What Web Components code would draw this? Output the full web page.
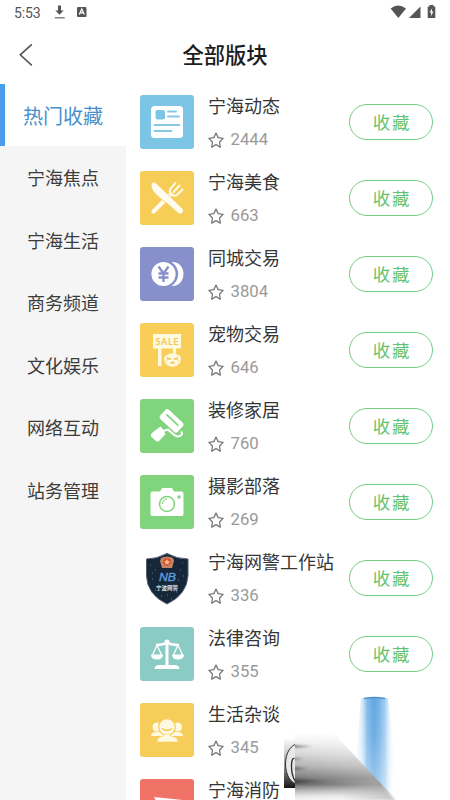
<!DOCTYPE html>
<html lang="zh-CN">
<head>
<meta charset="utf-8">
<title>全部版块</title>
<style>
html,body{margin:0;height:100%;overflow:hidden;background:#fff}
body{font-family:Roboto,"Noto Sans CJK SC",sans-serif;color:#333}
</style>
</head>
<body>
<forum-app></forum-app>
<script>
const define=(name,render)=>customElements.define(name,class extends HTMLElement{
  connectedCallback(){
    if(this.shadowRoot)return;
    this.attachShadow({mode:'open'}).innerHTML=render(this);
  }
});

define('status-bar',()=>`<style>
:host{display:flex;height:25px;box-sizing:border-box;padding:0 14px 0 14px;align-items:center;color:#555;font-size:14px}
time{width:40px;line-height:25px;padding-top:1px;letter-spacing:-.1px}
svg{display:block}.sp{flex:1}
</style><time>5:53</time>
<svg width="34" height="25" viewBox="54 0 34 25"><path d="M58 5.500h3v5h2.700l-4.200 4.300-4.200-4.300H58z" fill="#555"/><path d="M54.700 17.800h10" stroke="#666" stroke-width="1.200"/><rect x="77" y="7" width="9.500" height="10" rx="1" fill="#555"/><path d="M79.300 14.500l2.500-5.500 2.500 5.500M80.200 12.800h3.200" fill="none" stroke="#fff" stroke-width="1.300"/></svg>
<span class="sp"></span>
<svg width="47" height="25" viewBox="389 0 47 25"><path d="M390.600 8.500q7.600-6 15.400 0l-7.700 9.500z" fill="#555"/><path d="M420.500 6.500V18H409z" fill="#555"/><path d="M429.500 5h4v1.500h1.800V18h-7.600V6.500h1.800z" fill="#555"/><path d="M432.200 8l-2.700 4.500h1.700l-.3 3.700 2.600-4.700h-1.700z" fill="#fff"/></svg>`);

define('title-bar',()=>`<style>
:host{display:grid;grid-template-columns:50px 1fr 50px;height:59px;align-items:center}
h1{margin:0;padding-top:1px;text-align:center;font-size:21.300px;line-height:59px;font-weight:500;color:#1c1c1c}
svg{display:block}
</style><svg width="50" height="59" viewBox="0 25 50 59"><path d="M31.800 43.300L20.300 53.800 31.800 64.300" fill="none" stroke="#555" stroke-width="1.600"/></svg><h1><slot></slot></h1>`);

define('side-tab',()=>`<style>
:host{display:flex;box-sizing:border-box;height:62.500px;padding-top:4px;align-items:center;justify-content:center;font-size:18px;line-height:26px;color:#3c3c3c}
:host([active]){height:62px;background:#fff;border-left:5px solid #499deb;padding-right:5px;color:#4790cc;font-size:20px}
</style><slot></slot>`);

define('side-nav',()=>`<style>:host{display:block;background:#f5f5f5;width:126px;flex:none}</style><slot></slot>`);

const icons={
news:['#7cc5e5','<rect x="11" y="11" width="32" height="32" rx="3.500" fill="#fff"/><rect x="15.500" y="15" width="9.500" height="9.500" rx="2" fill="#7cc5e5"/><path d="M28 16.500h8M28 21.500h11M14.500 30h25M14.500 36h17" stroke="#88c7e2" stroke-width="1.800" stroke-linecap="round"/>'],
food:['#f6cd57','<g stroke="#fffcef" fill="none" stroke-linecap="round"><path d="M13.500 40.500l16-16" stroke-width="4.300"/><path d="M35.500 12l-5 5.500c-2.500 3.500 2.500 9 6.500 6.500l5.500-5.500M39.500 14.500l-6 6.500" stroke-width="1.900"/></g><path d="M11.500 12.500q1.500-3 5 0l26.500 25.500q1.500 2-.5 4t-4 .5L26 31.500Q13 23 11 16z" fill="#fffcef" stroke="#f6cd57" stroke-width=".8"/>'],
money:['#8790cb','<path d="M31.500 15c16-1 16 25 0 24 9-6 9-18 0-24z" fill="#fff"/><circle cx="23.500" cy="27" r="13" fill="#fff" stroke="#8790cb" stroke-width="1.800"/><path d="M18.500 19.500l5 7 5-7M23.500 26.500v8.500M18.500 26.500h10M18.500 30.500h10" stroke="#8790cb" stroke-width="2.300" fill="none"/>'],
sale:['#f8ce59','<path d="M13 11h28v14.500h-5v5h-3v-5H21.500V43H18V25.500h-5z" fill="#fff9df"/><text x="27" y="21.500" text-anchor="middle" textLength="23" font-family="Lato,sans-serif" font-weight="700" font-size="9" fill="#f0c658">SALE</text><ellipse cx="32.500" cy="37" rx="7.500" ry="6" fill="#f8ce59" stroke="#fff9df" stroke-width="1.500"/><path d="M26 31.500l-2.500 4.500 4 1.500zM39 31.500l2.500 4.500-4 1.500zM26 38q6.500-4 13 0-2 5-6.500 5T26 38z" fill="#fff9df"/><path d="M27 33q5.500-3 11 0l-3 4h-5z" fill="#fff9df"/><path d="M28.500 35l2.500 1.500M36.500 35l-2.500 1.500M30.500 40.500l2-1.500 2 1.500" stroke="#efbd42" stroke-width="1.400" fill="none"/>'],
roller:['#80d57c','<g transform="rotate(43 31 21)"><rect x="20" y="15" width="24" height="12.500" rx="2.500" fill="#fff"/><path d="M24.500 20h15" stroke="#80d57c" stroke-width="1.800" stroke-linecap="round"/></g><path d="M41 32.500l1 1.500q.5 2.500-4 3.500-3 0-10-7l-5 1.500" fill="none" stroke="#fff" stroke-width="2.100" stroke-linejoin="round"/><path d="M12 34l7-5.500q2-1.500 3 .5l3.500 6-6.500 7q-2 1.500-3.500-.5L11 37.500q-1-2 1-3.500z" fill="#fff"/>'],
camera:['#80d57c','<path d="M20 16.500l2-3.500h10l2 3.500h7.500q2 0 2 2v20.500q0 2-2 2h-29q-2 0-2-2V18.500q0-2 2-2z" fill="#fff"/><circle cx="27" cy="29" r="7.500" fill="none" stroke="#80d57c" stroke-width="1.500"/><path d="M22.500 29a5 5 0 0 1 4.500-5" stroke="#80d57c" fill="none"/><circle cx="39" cy="22" r="1.700" fill="#80d57c"/>'],
police:['','<path d="M27 2.500Q17 8 6.500 8V24.500Q7 43.500 27 53 47 43.500 48 24.500V8Q37 8 27 2.500z" fill="#172739" stroke="#4e5d6b" stroke-width="1"/><path d="M10 14h1M15 19h1M12 28h1M42 12h1M40 19h1M43 25h1M15 39h1M36 41h1M27 44h1M21 45h1M12 22h1M38 29h1M31 48h1" stroke="#52768e"/><path d="M21 7q6-3 12 0l1 3-2 7H22l-2-7z" fill="#c38665"/><circle cx="27" cy="11" r="3.800" fill="#db4935"/><path d="M27 8l1 2 2 .2-1.500 1.500.4 2-1.900-1-1.900 1 .4-2-1.500-1.500 2-.2z" fill="#f6c681"/><text x="27.500" y="29.800" text-anchor="middle" textLength="17" lengthAdjust="spacingAndGlyphs" font-family="Liberation Sans,sans-serif" font-style="italic" font-size="10.500" stroke="#5d9fe2" stroke-width=".3" fill="#5d9fe2">NB</text><text x="27" y="38.800" text-anchor="middle" textLength="22" font-family="Noto Sans CJK SC,sans-serif" font-weight="700" font-size="5.500" fill="#dce1e7">宁波网警</text>'],
law:['#8bcbc5','<g fill="none" stroke="#fff" stroke-width="2"><path d="M27 14v26" stroke-width="3"/><path d="M16 18q6 0 11-2 5 2 12 2" stroke-width="2.500"/><path d="M17 18l-4.500 10M17 18l4.500 10M38 18l-4.500 10M38 18l4.500 10" stroke-width="1.300"/></g><circle cx="27" cy="15" r="2.500" fill="#fff"/><path d="M11 27.500h12q0 5-6 5t-6-5M32 27.500h12q0 5-6 5t-6-5M14.500 42q0-4 5-4h15q5 0 5 4z" fill="#fff"/>'],
people:['#f6cd59','<g fill="#fff9e1"><circle cx="17" cy="24" r="4.500"/><circle cx="37.500" cy="24" r="4.500"/><path d="M11 33q0-4 6-4h20q6 0 6 4z"/></g><circle cx="27" cy="24" r="8.300" fill="#fff9e1" stroke="#f6cd59" stroke-width="1.300"/><path d="M17 39q0-5 6-6l2-2h4l2 2q7 1 7 6z" fill="#fff9e1" stroke="#f6cd59" stroke-width=".5"/><path d="M22 25.500q5 4 10 0" fill="none" stroke="#f2c653" stroke-width="1.400"/>'],
fire:['#f17367','<path d="M14 18l29 3v5H18z" fill="#fff"/>']
};
define('board-icon',el=>{
  const [bg,art]=icons[el.getAttribute('name')];
  return `<style>:host{display:block;width:54px;height:54px;border-radius:3px;background:${bg||'transparent'}}svg{display:block}</style><svg width="54" height="54" viewBox="0 0 54 54">${art}</svg>`;
});

define('favorite-button',()=>`<style>
:host{display:block;margin-top:9px}
button{display:block;width:84px;height:36px;box-sizing:border-box;padding:1px 0 0 2px;border:1.500px solid #75cd82;border-radius:18px;background:#fff;color:#62c370;font:400 17.500px/32px Roboto,"Noto Sans CJK SC",sans-serif;letter-spacing:1.700px}
</style><button><slot></slot></button>`);

define('board-row',el=>`<style>
:host{display:grid;grid-template-columns:54px 1fr 84px;column-gap:14px;height:76px;padding:0 17px 0 14px;align-items:start}
h2{margin:-1px 0 0;font-weight:400;font-size:18px;line-height:26px;color:#363636;white-space:nowrap}
p{display:flex;align-items:center;gap:6.500px;margin:9px 0 0;font-size:16.700px;line-height:22px;color:#999}
svg{display:block}
</style><board-icon name="${el.getAttribute('icon')}"></board-icon>
<div><h2><slot></slot></h2><p><svg width="16" height="17" viewBox="0 0 15 16"><path d="M7.500 1l2 4.300 4.700.7-3.400 3.400.8 4.800-4.100-2.300-4.100 2.300.8-4.800L.8 6l4.700-.7z" fill="none" stroke="#777" stroke-width="1.200" stroke-linejoin="round"/></svg><span>${el.getAttribute('count')}</span></p></div>
${el.hasAttribute('plain')?'':'<favorite-button>收藏</favorite-button>'}`);

define('board-list',()=>`<style>:host{display:block;flex:1;padding-top:11px;overflow:hidden}</style><slot></slot>`);

define('light-overlay',()=>`<style>:host{position:absolute;left:280px;top:690px;width:130px;height:110px;pointer-events:none}svg{display:block}</style>
<svg width="130" height="110" viewBox="280 690 130 110"><defs>
<linearGradient id="beam" gradientUnits="userSpaceOnUse" x1="355" y1="0" x2="395" y2="0"><stop offset="0" stop-color="#d5edff" stop-opacity="0"/><stop offset=".16" stop-color="#c5e3fa" stop-opacity=".6"/><stop offset=".3" stop-color="#83bcea"/><stop offset=".47" stop-color="#5fa6df"/><stop offset=".6" stop-color="#74b3e6"/><stop offset=".75" stop-color="#a2cef3"/><stop offset=".86" stop-color="#d7ecfc" stop-opacity=".7"/><stop offset="1" stop-color="#fff" stop-opacity="0"/></linearGradient>
<linearGradient id="fade" x2="0" y2="1"><stop offset="0" stop-color="#fff" stop-opacity="0"/><stop offset=".4" stop-color="#fff" stop-opacity=".1"/><stop offset="1" stop-color="#fff" stop-opacity=".45"/></linearGradient>
<linearGradient id="metal" gradientUnits="userSpaceOnUse" x1="0" y1="732" x2="0" y2="800"><stop offset="0" stop-color="#fff"/><stop offset=".15" stop-color="#f2f2f2"/><stop offset=".3" stop-color="#dcdcdc"/><stop offset=".5" stop-color="#b4b4b4"/><stop offset=".68" stop-color="#7c7c7c"/><stop offset=".77" stop-color="#707070"/><stop offset=".86" stop-color="#b5b5b5"/><stop offset=".94" stop-color="#e6e6e6"/><stop offset="1" stop-color="#f4f4f4"/></linearGradient>
<linearGradient id="right"><stop offset=".1" stop-color="#fff" stop-opacity="0"/><stop offset="1" stop-color="#fff" stop-opacity=".35"/></linearGradient>
<linearGradient id="corner" gradientUnits="userSpaceOnUse" x1="340" y1="0" x2="395" y2="0"><stop offset="0" stop-color="#aaa" stop-opacity="0"/><stop offset="1" stop-color="#aaa" stop-opacity=".65"/></linearGradient>
<linearGradient id="edge" x2="0" y2="1"><stop offset="0" stop-color="#fff"/><stop offset=".3" stop-color="#ccc"/><stop offset=".65" stop-color="#777"/><stop offset="1" stop-color="#151515"/></linearGradient>
<linearGradient id="streak"><stop offset="0" stop-color="#222" stop-opacity=".6"/><stop offset="1" stop-color="#777" stop-opacity="0"/></linearGradient>
<filter id="soft"><feGaussianBlur stdDeviation=".7"/></filter><filter id="haze"><feGaussianBlur stdDeviation="1"/></filter>
<clipPath id="left"><path d="M284 738h11v50h-11z"/></clipPath><clipPath id="rest"><path d="M295 690h115v110H295z"/></clipPath></defs>
<g filter="url(#soft)"><path d="M361 698h27l12 110h-48z" fill="url(#beam)"/></g><path d="M352 697h52v103h-52z" fill="url(#fade)"/>
<path d="M364 698.500q10.500-2 21 0" stroke="#4d91ca" fill="none" stroke-width="1.300"/>
<g clip-path="url(#rest)"><path d="M290 732h40q5 2 10 8l56 60v5H290z" fill="url(#metal)" filter="url(#soft)"/>
<path d="M290 732h40q5 2 10 8l56 60v5H290z" fill="url(#right)" filter="url(#soft)"/><path d="M340 780h36l19 20h-55z" fill="url(#corner)" filter="url(#haze)"/>
<g filter="url(#haze)" fill="url(#streak)"><path d="M293 745l20 1.500-20 1.500zM293 758l10 1-10 1zM293 767l14 1.500-14 1.500zM293 779l60 2-60 3z"/></g></g>
<g clip-path="url(#left)"><path d="M284 738h11v50h-11z" fill="url(#edge)"/><ellipse cx="298" cy="764" rx="12.500" ry="20" fill="#e7e7e7" stroke="#333"/><path d="M294.500 758.500q-3-1-3 8t4 15" fill="none" stroke="#292929" stroke-width="1.300"/></g></svg>`);

define('forum-app',()=>`<style>
:host{display:flex;flex-direction:column;position:relative;width:450px;height:800px;overflow:hidden;background:#fff}
main{display:flex;flex:1;min-height:0}
</style><status-bar></status-bar><title-bar>全部版块</title-bar><main>
<side-nav><side-tab active>热门收藏</side-tab><side-tab>宁海焦点</side-tab><side-tab>宁海生活</side-tab><side-tab>商务频道</side-tab><side-tab>文化娱乐</side-tab><side-tab>网络互动</side-tab><side-tab>站务管理</side-tab></side-nav>
<board-list>
<board-row icon="news" count="2444">宁海动态</board-row><board-row icon="food" count="663">宁海美食</board-row><board-row icon="money" count="3804">同城交易</board-row><board-row icon="sale" count="646">宠物交易</board-row><board-row icon="roller" count="760">装修家居</board-row><board-row icon="camera" count="269">摄影部落</board-row><board-row icon="police" count="336">宁海网警工作站</board-row><board-row icon="law" count="355">法律咨询</board-row><board-row icon="people" count="345" plain>生活杂谈</board-row><board-row icon="fire" count="" plain>宁海消防</board-row>
</board-list></main><light-overlay></light-overlay>`);
</script>
</body>
</html>
